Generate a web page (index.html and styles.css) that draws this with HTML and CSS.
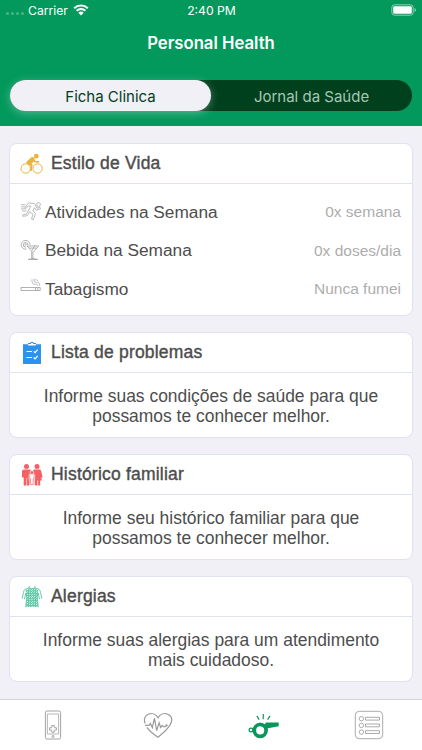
FILE: index.html
```html
<!DOCTYPE html>
<html lang="pt-BR">
<head>
    <meta charset="UTF-8">
    <meta name="viewport" content="width=device-width, initial-scale=1.0">
    <title>Personal Health</title>
    <link rel="stylesheet" href="styles.css">
</head>
<body>
    <header class="top">
        <div class="status-bar">
            <div class="carrier">
                <span class="dots"><i></i><i></i><i></i><i></i></span>
                <span class="carrier-name">Carrier</span>
                <svg class="wifi" width="16" height="12" viewBox="0 0 16 12">
                    <path d="M1.2 4.3a9.8 9.8 0 0 1 13.6 0M3.6 6.8a6.3 6.3 0 0 1 8.8 0" fill="none" stroke="#fff" stroke-width="2"/>
                    <path d="M5.3 8.8a3.8 3.8 0 0 1 5.4 0L8 11.5z" fill="#fff"/>
                </svg>
            </div>
            <span class="time">2:40 PM</span>
            <svg class="battery" width="26" height="12" viewBox="0 0 26 12">
                <rect x=".8" y=".8" width="21.4" height="10.4" rx="2.8" fill="none" stroke="#8fd0b2"/>
                <rect x="2.2" y="2.2" width="18.6" height="7.6" rx="1.4" fill="#fff"/>
                <path d="M23.5 4v4q1.5-.6 1.5-2t-1.5-2" fill="#8fd0b2"/>
            </svg>
        </div>
        <h1>Personal Health</h1>
        <div class="tabs">
            <button class="tab active">Ficha Clinica</button>
            <button class="tab">Jornal da Saúde</button>
        </div>
    </header>

    <main>
        <section class="card">
            <h2>
                <svg width="24" height="22" viewBox="0 0 24 22" fill="none" stroke="#e9b43c">
                    <circle cx="5.7" cy="15.5" r="4.7"/>
                    <circle cx="17.6" cy="15.5" r="4.7"/>
                    <circle cx="16.3" cy="3.2" r="2.4" fill="#e9b43c" stroke="none"/>
                    <path d="M7.6 9.8l4 2.2-.6 5" stroke-width="2" stroke-linejoin="round" stroke-linecap="round"/>
                    <path d="M12.6 5.6l2 2.9 4 .3" stroke-width="1.7" stroke-linecap="round" stroke-linejoin="round"/>
                    <path d="M6.600 9.400l5-4.900 2.200.4.600 2.300-3.200 3.400-2 .5z" fill="#e9b43c" stroke-linejoin="round"/>
                </svg>
                <span>Estilo de Vida</span>
            </h2>
            <ul class="habits">
                <li>
                    <svg width="22" height="22" viewBox="0 0 22 22" fill="none" stroke="#a8a8a8" stroke-width=".8">
                        <circle cx="18.5" cy="3.5" r="1.9"/>
                        <path d="M8.5 1.800l6.200.9 2.100 4.400 3.300-.6.500 1.300-4.600 1.400-1.500-2.500-1.600 3 2.600 2.900-2.200 6.100-1.800-.6 1.500-4.800-3.400-2.500-2.300 3.900-4.600.6.100-1.500 3.500-.6 4.600-8-2.600-.3-2.100 2.300-1-.8z"/>
                        <path d="M1 3.700h4.300M1 5.800h4M1 7.900h5.200M2 10h4.500"/>
                    </svg>
                    <span class="habit">Atividades na Semana</span>
                    <span class="value">0x semana</span>
                </li>
                <li>
                    <svg width="22" height="22" viewBox="0 0 22 22" fill="none" stroke="#a8a8a8" stroke-width=".9">
                        <path d="M7 6h11.800l-5.900 6.500v6.500M7 6l5.900 6.500M9 8.100h8M8 19.500q5-2.200 10 0zM11.700 11.500v7M12 10.500l3.300-5.500"/>
                        <path d="M10 4.800A4.400 4.400 0 1 0 6.500 9.100M7.900 4.800a2.300 2.300 0 1 0-2.300 2.400"/>
                        <path d="M5.600 2.500v4.600M3.300 4.800h4.500" stroke-width=".5"/>
                    </svg>
                    <span class="habit">Bebida na Semana</span>
                    <span class="value">0x doses/dia</span>
                </li>
                <li>
                    <svg width="22" height="22" viewBox="0 0 22 22" fill="none" stroke="#a8a8a8" stroke-width=".9">
                        <path d="M1 9.500h19.200v3H1zM15.500 9.500v3M17.800 9.500v3"/>
                        <path d="M19.700 8V6.600q0-2.200-2.200-2.200h-1.400q-2.200 0-2.200-2.200V.8M17.700 8v-.6q0-1-1.200-1h-1.400q-3.200-.2-3.200-3.200V1.400M14.400 2q2-1 3.800.9" stroke-width=".7"/>
                    </svg>
                    <span class="habit">Tabagismo</span>
                    <span class="value">Nunca fumei</span>
                </li>
            </ul>
        </section>

        <section class="card">
            <h2>
                <svg width="24" height="24" viewBox="0 0 24 24">
                    <path d="M3 3.2h5V2h2.2a2 2 0 0 1 3.6 0H16v1.2h5V23H3z" fill="#2d92ea"/>
                    <path d="M8.2 3h7.6v1.5H8.2zM11 2h2v1h-2z" fill="#fff"/>
                    <path d="M6.5 10.5h5.5M6.5 16.5h5.5M13.7 10.4l1.4 1.3 2.5-3M13.7 16.5l1.4 1.3 2.5-3" fill="none" stroke="#fff" stroke-width="1.2"/>
                </svg>
                <span>Lista de problemas</span>
            </h2>
            <p>Informe suas condições de saúde para que possamos te conhecer melhor.</p>
        </section>

        <section class="card">
            <h2>
                <svg width="24" height="24" viewBox="0 0 24 24" fill="#f66064">
                    <circle cx="6.5" cy="3.400" r="2.500"/>
                    <circle cx="17" cy="3.400" r="2.500"/>
                    <path d="M3.800 6.400h5.400q1.400 0 1.700 1.200v4.500H9.500v10.400H7.100V15h-.6v7.500H3.700v-8H2V8.400q0-2 1.800-2z"/>
                    <path d="M14.600 6.400h4.600q1.600 0 1.900 1.400l1.500 6.500-1.400.4.700 2.800h-1.700v5h-2.100v-5h-.7v5h-2.700V12.100h-1.600V7.600q.3-1.200 1.500-1.200z"/>
                    <path d="M8.700 11.600h6.400v4.600h-1.200v6.300H9.900v-6.300H8.700z" fill="#fff"/>
                    <path d="M9.700 12.200v3.500h.9v5.800h2.600v-5.800h.9v-3.500" fill="none" stroke="#f66064" stroke-width=".7"/>
                    <circle cx="11.900" cy="9.600" r="1.900" stroke="#fff" stroke-width=".7"/>
                </svg>
                <span>Histórico familiar</span>
            </h2>
            <p>Informe seu histórico familiar para que possamos te conhecer melhor.</p>
        </section>

        <section class="card">
            <h2>
                <svg width="24" height="24" viewBox="0 0 24 24" fill="none" stroke="#58c5a1">
                    <defs>
                        <pattern id="spots" width="2.4" height="2.4" patternUnits="userSpaceOnUse">
                            <rect x=".2" y=".2" width=".9" height=".9" fill="#b0e6d4"/>
                            <rect x="1.400" y="1.400" width=".9" height=".9" fill="#b0e6d4"/>
                        </pattern>
                    </defs>
                    <path d="M9.500 2.500q2.500 1.600 5 0l1.500 1.500 2.500 1-1 8 .5 9H6l.5-9-1-8 2.500-1z" fill="url(#spots)" stroke="none"/>
                    <path d="M9.5 1l-.8 2-3.5 1.300q-1.700.8-1.800 3.500L2.200 13.700M14.500 1l.8 2 3.500 1.300q1.700.8 1.800 3.500l1.200 5.900M5.700 8l-1.200 6.200M18.300 8l1.200 6.200M6.200 8.500q1.300 4 .1 8l-.6 5.700M17.800 8.500q-1.300 4-.1 8l.6 5.700" stroke-width=".9"/>
                </svg>
                <span>Alergias</span>
            </h2>
            <p>Informe suas alergias para um atendimento mais cuidadoso.</p>
        </section>
    </main>

    <nav class="bottom-nav">
        <a>
            <svg width="30" height="30" viewBox="0 0 30 30" fill="none" stroke="#a3a3a3">
                <rect x="7.4" y="1" width="15.2" height="28" rx="1.5"/>
                <path d="M9.4 4h11.2v20H9.4z" stroke-width=".8"/>
                <path d="M13.8 15.5h2.4v1.8q0 .4.4.4h1.8v2.4h-1.8q-.4 0-.4.4v1.8h-2.4v-1.8q0-.4-.4-.4h-1.800v-2.400h1.800q.4 0 .4-.4z"/>
                <circle cx="15" cy="26.5" r="1"/>
            </svg>
        </a>
        <a>
            <svg width="30" height="30" viewBox="0 0 30 30" fill="none" stroke="#999" stroke-width="1.2">
                <path d="M2.2 13.5C.3 9 2.2 5.5 5.2 4.2 9 2.7 13 4.3 15 7.8c2-3.5 6-5.1 9.800-3.600C28 5.600 29.500 9 28 13c-1.700 4.600-6.500 9-13 14.200C10 24 6.400 20.800 4 17.300"/>
                <path d="M2 15.4h4l1.4-2 2 4.2 2-9.6 2.3 12.7 2.4-8 1.5 4.8 1.6-2.1 1.3 1.3h2.2"/>
                <circle cx="23.5" cy="15.4" r=".6"/>
            </svg>
        </a>
        <a>
            <svg width="32" height="30" viewBox="0 0 32 30" fill="none" stroke="#08965b">
                <path d="M8.9 5.9l2.2 3.7M15.2 4v5.2M22 5.9l-2.4 3.7" stroke-width="1.2"/>
                <circle cx="3" cy="20" r="1.9" stroke-width="1.2"/>
                <circle cx="12.2" cy="20.4" r="5.9" stroke-width="3.7"/>
                <path d="M11.5 12.7h1.7l1 1.800h2.600l1-2h12.900v3.800l-10.700 2-4.500-.8-4-2.200z" fill="#08965b" stroke="none"/>
            </svg>
        </a>
        <a>
            <svg width="30" height="30" viewBox="0 0 30 30" fill="none" stroke="#a0a0a0" stroke-width=".9">
                <rect x="1.3" y="1.3" width="27.4" height="27.4" rx="4"/>
                <circle cx="7.4" cy="8.7" r="2.2"/>
                <circle cx="7.4" cy="15.4" r="2.2"/>
                <circle cx="7.4" cy="22.1" r="2.2"/>
                <path d="M11.5 7.3h14v2.8h-14zM11.5 14h14v2.8h-14zM11.5 20.7h14v2.8h-14z"/>
            </svg>
        </a>
    </nav>
</body>
</html>
```
FILE: styles.css
```css
body {
    margin: 0;
    height: 750px;
    display: flex;
    flex-direction: column;
    background: #f1f0f7;
    color: #4d4d4d;
    font-family: "Liberation Sans", Arial, sans-serif;
    overflow: hidden;
}

.top {
    box-sizing: border-box;
    height: 126px;
    flex-shrink: 0;
    background: #03995c;
    color: #fff;
    font-family: Inter, sans-serif;
}

.status-bar {
    display: grid;
    grid-template-columns: 1fr auto 1fr;
    align-items: center;
    height: 20px;
    padding: 0 5px 0 6px;
    font-size: 12.2px;
}

.carrier {
    display: flex;
    align-items: center;
}

.dots {
    display: flex;
    gap: 2px;
    padding-top: 7px;
    margin-right: 4px;
}

.dots i {
    width: 3px;
    height: 3px;
    border-radius: 50%;
    background: #4ab488;
}

.wifi {
    margin-left: 5px;
}

.battery {
    justify-self: end;
}

h1 {
    margin: 0;
    height: 46px;
    line-height: 46px;
    text-align: center;
    font-size: 16.7px;
    font-weight: 600;
}

.tabs {
    display: flex;
    height: 31px;
    margin: 14px 10px 0;
    border-radius: 16px;
    background: #00401d;
}

.tab {
    flex: 1;
    border: none;
    border-radius: 16px;
    padding: 1px 0 0;
    background: none;
    color: #a7c7b5;
    font: 15px Inter, sans-serif;
}

.tab.active {
    background: #f1f0f7;
    color: #00401d;
    box-shadow: 0 2px 8px rgba(241, 240, 247, 0.35);
}

main {
    flex: 1;
    display: flex;
    flex-direction: column;
    gap: 16px;
    padding: 17px 9px 0;
}

.card {
    box-sizing: border-box;
    height: 106px;
    flex-shrink: 0;
    background: #fff;
    border: 1px solid #dfe2f0;
    border-radius: 8px;
}

.card:first-child {
    height: 173px;
}

.card h2 {
    display: flex;
    align-items: center;
    gap: 7px;
    height: 39px;
    margin: 0;
    padding-left: 10px;
    border-bottom: 1px solid #dfe2f0;
    font-size: 17.5px;
    font-weight: 400;
    letter-spacing: 0.2px;
    -webkit-text-stroke: 0.4px #4d4d4d;
}

.card p {
    margin: 0;
    padding: 13px 24px 0;
    text-align: center;
    font-size: 17.45px;
    line-height: 20px;
}

.habits {
    margin: 0;
    padding: 9px 11px 0 10px;
    list-style: none;
}

.habits li {
    display: flex;
    align-items: center;
    height: 38.6px;
}

.habit {
    flex: 1;
    margin-left: 3px;
    font-size: 17.25px;
}

.value {
    color: #adadad;
    font-size: 15.5px;
}

.bottom-nav {
    box-sizing: border-box;
    height: 51px;
    flex-shrink: 0;
    display: flex;
    background: #fff;
    border-top: 1px solid #d5d5da;
}

.bottom-nav a {
    flex: 1;
    display: flex;
    align-items: center;
    justify-content: center;
}
```
